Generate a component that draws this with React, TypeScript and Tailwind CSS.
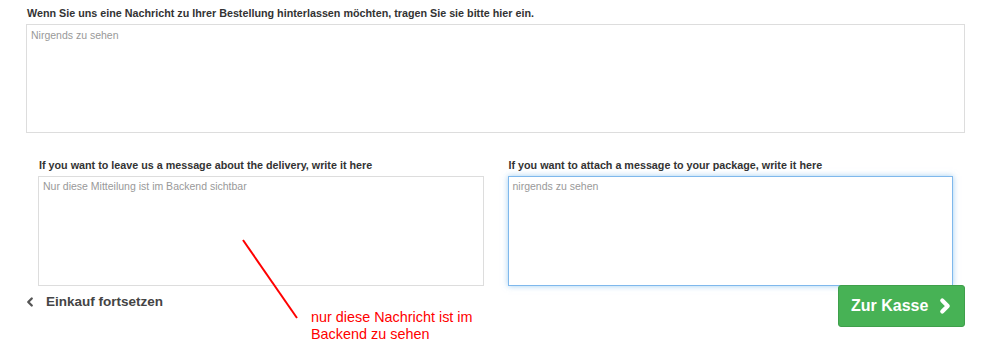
import { ChevronLeft, ChevronRight } from "lucide-react";

const Label = ({ text }: { text: string }) => (
  <label className="block text-[10.75px] font-bold leading-[14px] text-[#333] mb-[4px]">{text}</label>
);

const App = () => {
  return (
    <div className="relative w-[1000px] h-[357px] bg-white overflow-hidden font-['Liberation_Sans',Arial,sans-serif]">
      <div className="pl-[26px] pt-[6px] w-[965px]">
        <div className="pl-[1px]">
          <Label text="Wenn Sie uns eine Nachricht zu Ihrer Bestellung hinterlassen möchten, tragen Sie sie bitte hier ein." />
        </div>
        <textarea
          className="block w-[939px] h-[109px] border border-[#ddd] px-[4px] pt-[3px] text-[10.5px] text-[#333] placeholder:text-[#999] resize-none outline-none"
          placeholder="Nirgends zu sehen"
        />

        <div className="flex mt-[25px]">
          <div className="w-1/2 px-[12px]">
            <div className="pl-[1px]">
              <Label text="If you want to leave us a message about the delivery, write it here" />
            </div>
            <textarea
              className="block w-full h-[110px] border border-[#ddd] px-[4px] pt-[2px] text-[10.5px] text-[#333] placeholder:text-[#999] resize-none outline-none"
              placeholder="Nur diese Mitteilung ist im Backend sichtbar"
            />
          </div>
          <div className="w-1/2 px-[12px]">
            <div className="pl-[1px]">
              <Label text="If you want to attach a message to your package, write it here" />
            </div>
            <textarea
              className="block w-full h-[110px] border border-[#7fb8ec] shadow-[0_0_6px_rgba(102,175,233,0.6)] px-[4px] pt-[2px] text-[10.5px] text-[#333] placeholder:text-[#999] resize-none outline-none"
              placeholder="nirgends zu sehen"
            />
          </div>
        </div>

        <div className="flex items-start justify-between -mt-[1px]">
          <a className="flex items-center gap-[9px] mt-[7px] text-[13.5px] font-bold text-[#444]">
            <ChevronLeft size={14} strokeWidth={4} className="text-[#555] -ml-[3px]" />
            Einkauf fortsetzen
          </a>
          <button className="flex items-center gap-[6px] w-[127px] h-[42px] pl-[12px] rounded-[3px] bg-[#47b255] border border-[#3f9f4b] text-white text-[16px] font-bold">
            Zur Kasse
            <ChevronRight size={22} strokeWidth={4.5} />
          </button>
        </div>
      </div>

      <svg className="absolute left-0 top-0 pointer-events-none" width="1000" height="357">
        <line x1="243" y1="240" x2="297" y2="318" stroke="#f00" strokeWidth="2" />
      </svg>
      <div className="absolute left-[311px] top-[309px] text-[14.4px] leading-[17px] text-[#f00]">
        nur diese Nachricht ist im
        <br />
        Backend zu sehen
      </div>
    </div>
  );
};

export default App;
